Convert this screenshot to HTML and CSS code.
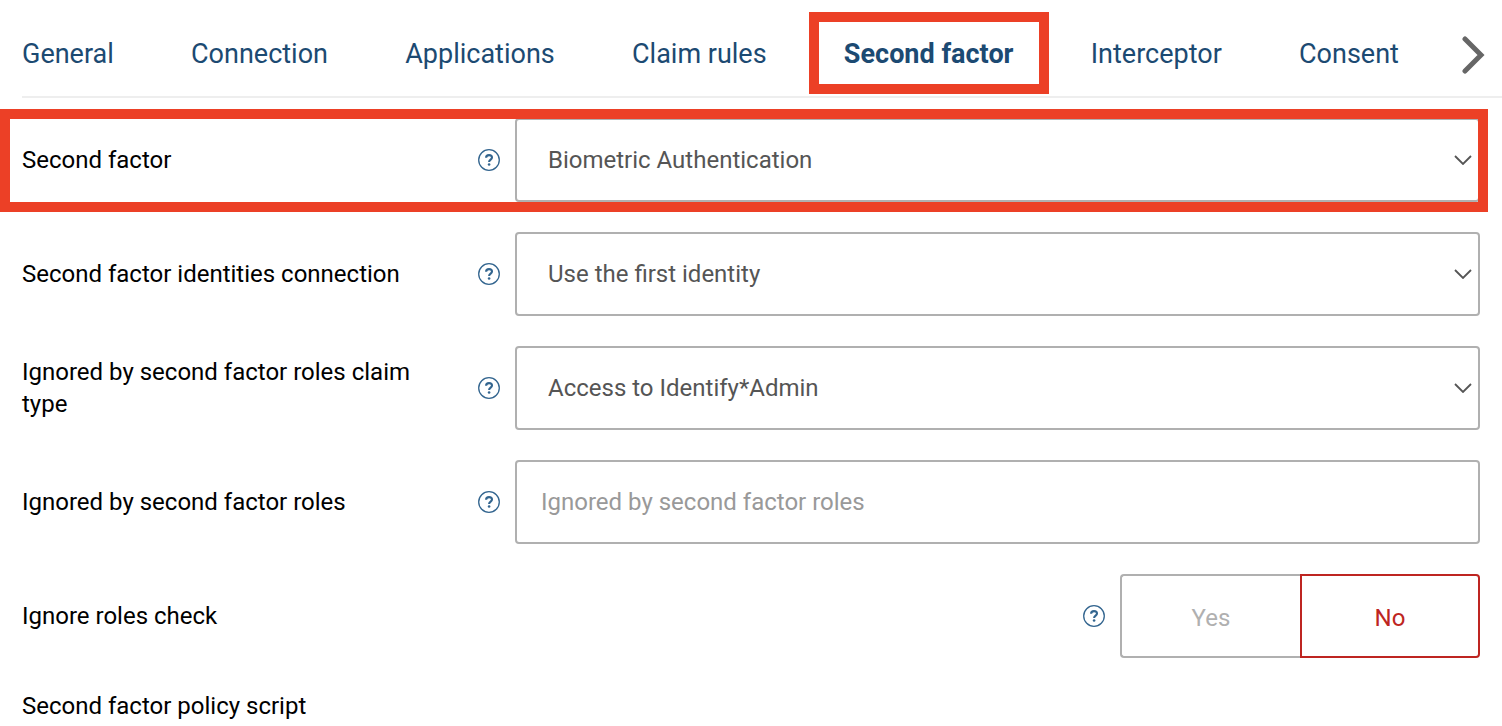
FILE: index.html
```html
<!DOCTYPE html>
<html lang="en">

<head>
    <meta charset="UTF-8">
    <meta name="viewport" content="width=device-width, initial-scale=1.0">
    <title>Second factor</title>
    <link rel="stylesheet" href="styles.css">
</head>

<body>
    <!-- icons shared by the rows -->
    <svg class="sprite" aria-hidden="true">
        <symbol id="icon-help" viewBox="0 0 22 22">
            <circle cx="11" cy="11" r="10.3" fill="none" stroke="currentColor" stroke-width="1.3" />
            <path d="M8.1 8.7C8.1 7 9.3 6.1 11 6.1s3 .9 3 2.5c0 2-2.9 2.1-2.9 4.5" fill="none" stroke="currentColor" stroke-width="2.1" />
            <circle cx="11.1" cy="15.5" r="1.3" fill="currentColor" />
        </symbol>
        <symbol id="icon-down" viewBox="0 0 18 10">
            <path d="M1 1l8 8 8-8" fill="none" stroke="currentColor" stroke-width="1.8" />
        </symbol>
    </svg>

    <header class="tab-bar">
        <nav class="tabs">
            <a href="#general">General</a>
            <a href="#connection">Connection</a>
            <a href="#applications">Applications</a>
            <a href="#claim-rules">Claim rules</a>
            <a href="#second-factor" class="active" aria-current="page">Second factor</a>
            <a href="#interceptor">Interceptor</a>
            <a href="#consent">Consent</a>
        </nav>
        <button type="button" class="next" aria-label="Next tabs">
            <svg width="24" height="40" viewBox="0 0 24 40">
                <path d="M4 5l16 16L4 37" fill="none" stroke="#666" stroke-width="5" stroke-linecap="round" />
            </svg>
        </button>
    </header>

    <form class="settings">
        <div class="row highlight">
            <label for="factor">Second factor</label>
            <svg class="help"><use href="#icon-help" /></svg>
            <div class="select">
                <select id="factor">
                    <option>Biometric Authentication</option>
                </select>
                <svg class="arrow"><use href="#icon-down" /></svg>
            </div>
        </div>

        <div class="row">
            <label for="identities">Second factor identities connection</label>
            <svg class="help"><use href="#icon-help" /></svg>
            <div class="select">
                <select id="identities">
                    <option>Use the first identity</option>
                </select>
                <svg class="arrow"><use href="#icon-down" /></svg>
            </div>
        </div>

        <div class="row">
            <label for="claimType">Ignored by second factor roles claim type</label>
            <svg class="help"><use href="#icon-help" /></svg>
            <div class="select">
                <select id="claimType">
                    <option>Access to Identify*Admin</option>
                </select>
                <svg class="arrow"><use href="#icon-down" /></svg>
            </div>
        </div>

        <div class="row">
            <label for="roles">Ignored by second factor roles</label>
            <svg class="help"><use href="#icon-help" /></svg>
            <input type="text" id="roles" placeholder="Ignored by second factor roles">
        </div>

        <div class="row row-toggle">
            <span id="checkLabel">Ignore roles check</span>
            <svg class="help"><use href="#icon-help" /></svg>
            <div class="toggle" role="group" aria-labelledby="checkLabel">
                <button type="button" aria-pressed="false">Yes</button>
                <button type="button" class="selected" aria-pressed="true">No</button>
            </div>
        </div>

        <div class="row-title">Second factor policy script</div>
    </form>
</body>

</html>
```

FILE: styles.css
```css
* {
    box-sizing: border-box;
}

body {
    margin: 0;
    background: #fff;
    color: #000;
    font-family: Roboto, Arial, sans-serif;
    font-size: 24px;
    line-height: 32px;
}

.sprite {
    display: none;
}

.tab-bar {
    display: flex;
    align-items: center;
    margin-left: 22px;
    padding: 28px 17px 16px 0;
    border-bottom: 2px solid #eee;
}

.tabs {
    display: flex;
    flex: 1;
    justify-content: space-between;
    font-size: 27px;
    line-height: 52px;
}

.tabs a {
    color: #1c4a72;
    text-decoration: none;
    white-space: nowrap;
}

.tabs .active {
    position: relative;
    font-weight: bold;
}

.tabs .active::after {
    content: "";
    position: absolute;
    inset: -16px -35px -14px;
    border: 10px solid #ec4026;
    pointer-events: none;
}

.next {
    display: flex;
    margin-left: 62px;
    padding: 0;
    border: none;
    background: none;
    cursor: pointer;
}

.settings {
    padding: 20px 22px 0;
}

.row {
    display: grid;
    grid-template-columns: 441px 22px 1fr;
    column-gap: 15px;
    align-items: center;
    min-height: 84px;
    margin-bottom: 30px;
}

.row label {
    padding-right: 24px;
}

.row-toggle {
    grid-template-columns: 1fr 22px 360px;
}

.highlight {
    position: relative;
}

.highlight::after {
    content: "";
    position: absolute;
    inset: -9px -8px -10px -22px;
    border: 10px solid #ec4026;
    pointer-events: none;
}

.help {
    width: 22px;
    height: 22px;
    color: #33658f;
    overflow: visible;
}

.select {
    position: relative;
}

select,
input {
    display: block;
    width: 100%;
    height: 84px;
    border: 2px solid #b0b0b0;
    border-radius: 4px;
    background: #fff;
    color: #555;
    font: inherit;
}

select {
    appearance: none;
    padding: 0 48px 0 31px;
}

input {
    padding: 0 24px;
}

input::placeholder {
    color: #999;
}

.arrow {
    position: absolute;
    top: 37px;
    right: 8px;
    width: 18px;
    height: 10px;
    color: #555;
    pointer-events: none;
}

.toggle {
    display: flex;
}

.toggle button {
    width: 50%;
    height: 84px;
    padding: 4px 0 0;
    border: 2px solid #b0b0b0;
    border-right: none;
    border-radius: 4px 0 0 4px;
    background: #fff;
    color: #b0b0b0;
    font: inherit;
    cursor: pointer;
}

.toggle .selected {
    border: 2px solid #be2521;
    border-radius: 0 4px 4px 0;
    color: #be2521;
}

.row-title {
    padding: 2px 0;
}
```
